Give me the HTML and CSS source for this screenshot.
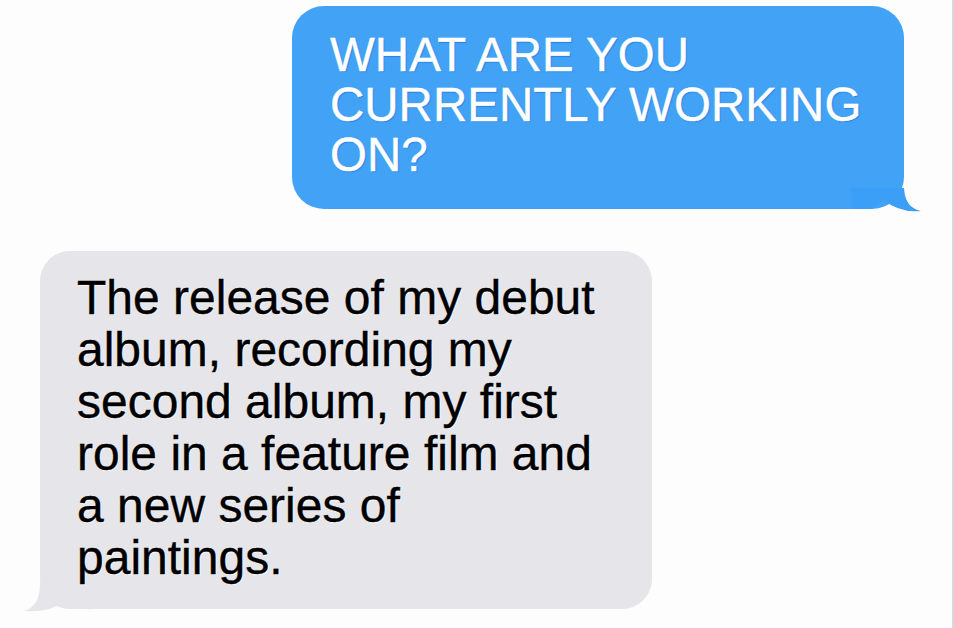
FILE: index.html
```html
<!DOCTYPE html>
<html lang="en">
<head>
<meta charset="utf-8">
<title>Interview</title>
<link rel="stylesheet" href="styles.css">
</head>
<body>
<main class="chat">
  <div class="bubble bubble-sent">
    <p class="msg">WHAT ARE YOU CURRENTLY WORKING ON?</p>
    <svg class="tail tail-sent" width="70" height="25" viewBox="0 0 70 25" aria-hidden="true">
      <path d="M0,1 L53,1 Q54,21 70,24 Q48,26 33,13 Q20,23 0,22 Z" fill="#3b9ef7"/>
    </svg>
  </div>
  <div class="bubble bubble-received">
    <p class="msg">The release of my debut album, recording my second album, my first role in a feature film and a new series of paintings.</p>
    <svg class="tail tail-received" width="70" height="30" viewBox="0 0 70 30" aria-hidden="true">
      <path d="M70,1 L16,1 Q16,25 0,29 Q24,31 37,21 Q50,28 70,27 Z" fill="#e5e5ea"/>
    </svg>
  </div>
</main>
</body>
</html>
```
FILE: styles.css
```css
html, body {
  margin: 0;
  padding: 0;
  background: #fdfdfd;
}

.chat {
  box-sizing: border-box;
  width: 954px;
  height: 628px;
  border-right: 2px solid #d8d8d8;
  display: flex;
  flex-direction: column;
  padding-top: 6px;
  gap: 42px;
  font-family: "Liberation Sans", Arial, Helvetica, sans-serif;
}

.bubble {
  position: relative;
  box-sizing: border-box;
  width: 612px;
  border-radius: 32px;
}

.msg {
  margin: 0;
  position: relative;
  z-index: 1;
}

.bubble-sent {
  align-self: flex-end;
  margin-right: 48px;
  background: #42a2f5;
  color: #ffffff;
  padding: 24px 28px 29px 38px;
  font-size: 47.5px;
  line-height: 50px;
  -webkit-text-stroke: 0.4px #ffffff;
  text-shadow: 1px 1px 1px rgba(0, 80, 190, 0.45);
}

.bubble-received {
  align-self: flex-start;
  margin-left: 40px;
  background: #e5e5ea;
  color: #000000;
  padding: 21px 45px 25px 37px;
  font-size: 48px;
  line-height: 52px;
  -webkit-text-stroke: 0.4px #000000;
  text-shadow: 1px 1px 1px rgba(255, 255, 255, 0.9);
  border-radius: 30px;
}

.tail {
  position: absolute;
  display: block;
}

.tail-sent {
  right: -17px;
  bottom: -3px;
}

.tail-received {
  left: -16px;
  bottom: -3px;
}
```
